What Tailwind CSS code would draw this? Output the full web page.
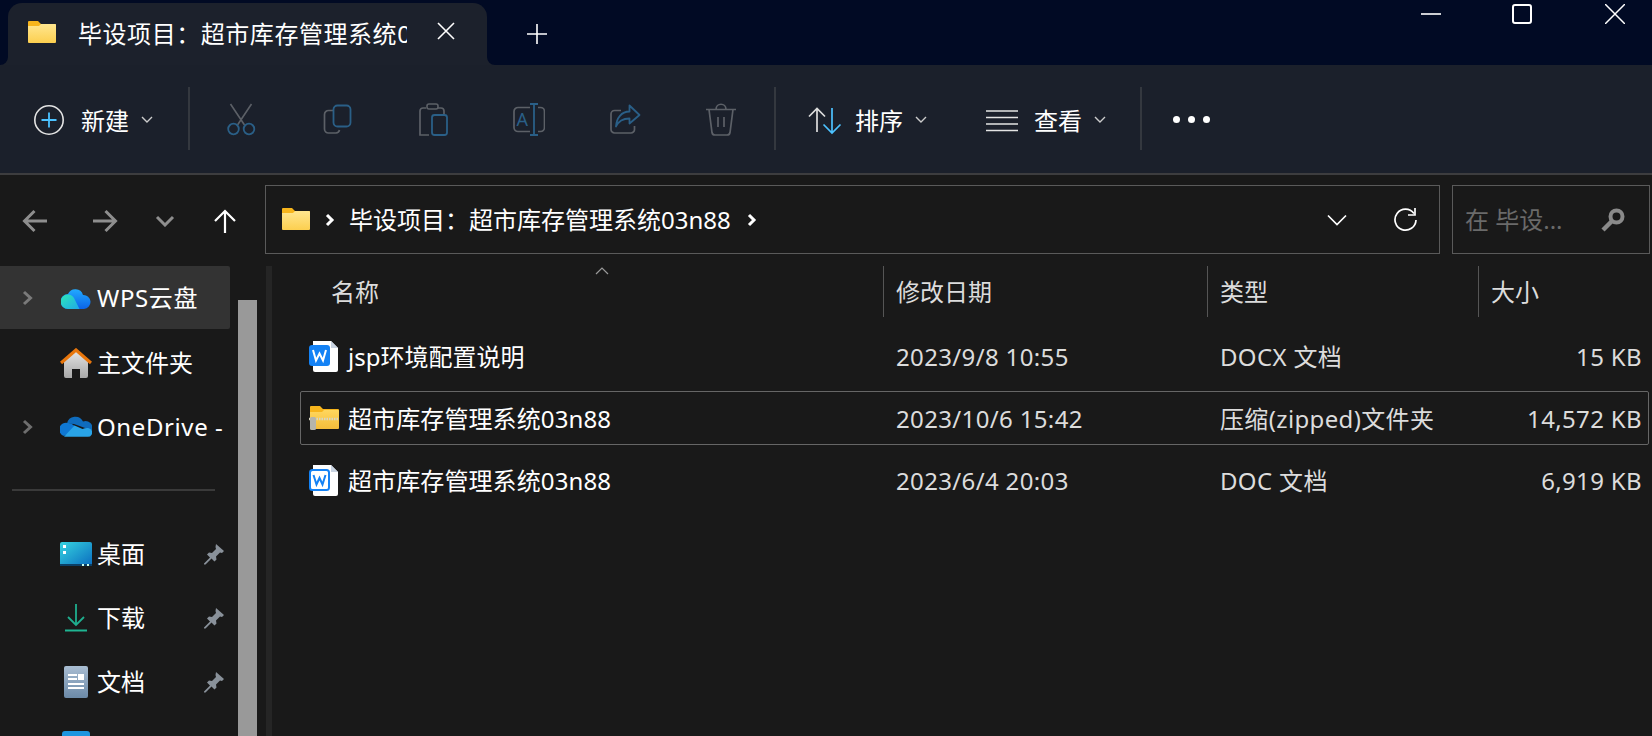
<!DOCTYPE html>
<html lang="zh-CN">
<head>
<meta charset="utf-8">
<script src="https://cdn.jsdelivr.net/npm/@tailwindcss/browser@4"></script>
</head>
<body class="m-0 overflow-hidden bg-[#191919]">
<div class="w-[1652px] h-[736px] overflow-hidden flex flex-col text-white text-[24px] leading-[32px] font-[family-name:'Noto_Sans','Noto_Sans_CJK_SC',sans-serif]">

  <!-- title bar -->
  <div class="h-[65px] shrink-0 bg-[#010a24] flex items-start">
    <div class="relative ml-2 mt-[3px] w-[479px] h-[62px] bg-[#1c212c] rounded-t-[14px] flex items-center">
      <svg class="absolute left-[-8px] bottom-0" width="8" height="8" viewBox="0 0 8 8"><path d="M8 0V8H0A8 8 0 0 0 8 0Z" fill="#1c212c"/></svg>
      <svg class="absolute right-[-8px] bottom-0" width="8" height="8" viewBox="0 0 8 8"><path d="M0 0V8H8A8 8 0 0 1 0 0Z" fill="#1c212c"/></svg>
      <svg class="ml-5 mb-[5px] shrink-0" width="28" height="24" viewBox="0 0 28 24"><defs><linearGradient id="f1" x1="0" y1="0" x2="0" y2="1"><stop offset="0" stop-color="#ffe68f"/><stop offset="1" stop-color="#fccf4f"/></linearGradient></defs><path d="M1 1h9l3 3h14a1 1 0 0 1 1 1v4H0V2a1 1 0 0 1 1-1z" fill="#f7b51c"/><path d="M0 6h11l2-2h14a1 1 0 0 1 1 1v17a1 1 0 0 1-1 1H1a1 1 0 0 1-1-1z" fill="url(#f1)"/></svg>
      <div class="ml-[22px] w-[329px] overflow-hidden whitespace-nowrap tracking-[0.55px]">毕设项目：超市库存管理系统03n88</div>
      <svg class="ml-[30px] mb-[6px]" width="18" height="18" viewBox="0 0 18 18"><path d="M1 1l16 16M17 1L1 17" stroke="#fff" stroke-width="1.6" fill="none"/></svg>
    </div>
    <svg class="ml-10 mt-6" width="20" height="20" viewBox="0 0 20 20"><path d="M10 0v20M0 10h20" stroke="#fff" stroke-width="1.6" fill="none"/></svg>
    <div class="ml-auto flex items-start pt-1 pr-[27px]">
      <svg width="20" height="20" viewBox="0 0 20 20"><path d="M0 10h20" stroke="#fff" stroke-width="1.6"/></svg>
      <div class="ml-[71px] w-5 h-5 border-2 border-white rounded-[3px]"></div>
      <svg class="ml-[73px]" width="20" height="20" viewBox="0 0 20 20"><path d="M0 0l20 20M20 0L0 20" stroke="#fff" stroke-width="1.5" fill="none"/></svg>
    </div>
  </div>

  <!-- toolbar -->
  <div class="h-[110px] shrink-0 bg-[#1b202b] border-b-2 border-[#3d3d3f] flex items-center pt-[1px]">
    <svg class="ml-[33px] shrink-0" width="32" height="32" viewBox="0 0 32 32"><circle cx="16" cy="16" r="14.2" fill="none" stroke="#e4e4e4" stroke-width="1.6"/><path d="M16 8.5v15M8.5 16h15" stroke="#4cc2ff" stroke-width="1.8"/></svg>
    <span class="ml-4 w-12 whitespace-nowrap pt-[3px]">新建</span>
    <svg class="ml-3" width="12" height="8" viewBox="0 0 12 8"><path d="M1 1l5 5 5-5" stroke="#ccc" stroke-width="1.4" fill="none"/></svg>
    <div class="ml-[35px] mb-[2px] w-[2px] h-[63px] bg-[#34383f]"></div>
    <div class="ml-[3px] flex">
      <div class="w-24 flex justify-center"><svg width="32" height="34" viewBox="0 0 32 34"><path d="M5.5 1l14 21M26.5 1l-14 21" stroke="#5c6067" stroke-width="1.6" fill="none"/><circle cx="8.5" cy="26" r="5.3" fill="none" stroke="#2a5f87" stroke-width="1.8"/><circle cx="24" cy="26" r="5.3" fill="none" stroke="#2a5f87" stroke-width="1.8"/></svg></div>
      <div class="w-24 flex justify-center"><svg width="32" height="32" viewBox="0 0 32 32"><path d="M12 7.5H7.5a4 4 0 0 0-4 4V26a4 4 0 0 0 4 4H15a4 4 0 0 0 3.5-3" fill="none" stroke="#5c6067" stroke-width="1.7"/><rect x="12.5" y="2.5" width="17" height="21" rx="4" fill="none" stroke="#2a5f87" stroke-width="1.8"/></svg></div>
      <div class="w-24 flex justify-center"><svg width="32" height="34" viewBox="0 0 32 34"><path d="M9 5H6a3 3 0 0 0-3 3v24h9M21 5h3a3 3 0 0 1 3 3v3" fill="none" stroke="#5c6067" stroke-width="1.7"/><rect x="10" y="1" width="11" height="5" rx="2" fill="none" stroke="#5c6067" stroke-width="1.6"/><rect x="15" y="12" width="15" height="20" rx="2.5" fill="none" stroke="#2a5f87" stroke-width="1.8"/></svg></div>
      <div class="w-24 flex justify-center"><svg width="32" height="34" viewBox="0 0 32 34"><path d="M17 4.500H5a4 4 0 0 0-4 4v16a4 4 0 0 0 4 4h12M25 4.500h2.500a4 4 0 0 1 4 4v16a4 4 0 0 1-4 4H25" fill="none" stroke="#5c6067" stroke-width="1.7"/><path d="M21 1v31M17 1h8M17 32h8" stroke="#2a5f87" stroke-width="1.8" fill="none"/><text x="3.500" y="23" font-size="18" fill="#2a5f87" font-family="Noto Sans">A</text></svg></div>
      <div class="w-24 flex justify-center"><svg width="32" height="32" viewBox="0 0 32 32"><path d="M12 7.500H5.500a3.500 3.500 0 0 0-3.500 3.500V26.500A3.500 3.500 0 0 0 5.500 30H22a3.500 3.500 0 0 0 3.500-3.500V23" fill="none" stroke="#5c6067" stroke-width="1.700"/><path d="M20.500 2.500 30.500 12 20.500 20.500V15.500C14 15.500 9.500 18 7 23.500 7.500 15 12.500 8.500 20.500 8.500Z" fill="none" stroke="#2a5f87" stroke-width="1.800" stroke-linejoin="round"/></svg></div>
      <div class="w-24 flex justify-center"><svg width="32" height="34" viewBox="0 0 32 34"><path d="M1 6.500h30M11 6.500c0-7 10-7 10 0M4 6.500l3 23a3 3 0 0 0 3 2.500h12a3 3 0 0 0 3-2.500l3-23M13 14v10M19 14v10" fill="none" stroke="#5c6067" stroke-width="1.700"/></svg></div>
    </div>
    <div class="ml-[5px] mb-[2px] w-[2px] h-[63px] bg-[#34383f]"></div>
    <svg class="ml-[32px] shrink-0" width="34" height="32" viewBox="0 0 34 32"><path d="M9 4.500V28M1 12.500l8-8 8 8" fill="none" stroke="#ddd" stroke-width="1.700"/><path d="M24 4v25M15.500 20.500l8.500 8.500 8.500-8.500" fill="none" stroke="#4cc2ff" stroke-width="1.700"/></svg>
    <span class="ml-[13px] w-12 whitespace-nowrap pt-[3px]">排序</span>
    <svg class="ml-3" width="12" height="8" viewBox="0 0 12 8"><path d="M1 1l5 5 5-5" stroke="#ccc" stroke-width="1.400" fill="none"/></svg>
    <svg class="ml-[59px] shrink-0" width="32" height="24" viewBox="0 0 32 24"><path d="M0 3h32M0 9.500h32M0 16h32M0 22.500h32" stroke="#e4e4e4" stroke-width="1.700"/></svg>
    <span class="ml-4 w-12 whitespace-nowrap pt-[3px]">查看</span>
    <svg class="ml-3" width="12" height="8" viewBox="0 0 12 8"><path d="M1 1l5 5 5-5" stroke="#ccc" stroke-width="1.400" fill="none"/></svg>
    <div class="ml-[34px] mb-[2px] w-[2px] h-[63px] bg-[#34383f]"></div>
    <div class="ml-[31px] flex gap-[8px]">
      <div class="w-[7px] h-[7px] rounded-full bg-white"></div>
      <div class="w-[7px] h-[7px] rounded-full bg-white"></div>
      <div class="w-[7px] h-[7px] rounded-full bg-white"></div>
    </div>
  </div>

  <!-- address row -->
  <div class="h-[91px] shrink-0 flex items-start pt-[10px]">
    <div class="w-[265px] h-[69px] flex items-center shrink-0 pt-[2px]">
      <svg class="ml-[22px]" width="26" height="24" viewBox="0 0 26 24"><path d="M25 12H3M12.500 2 2.500 12l10 10" fill="none" stroke="#8e8e8e" stroke-width="3"/></svg>
      <svg class="ml-11" width="26" height="24" viewBox="0 0 26 24"><path d="M1 12h22M13.500 2l10 10-10 10" fill="none" stroke="#8e8e8e" stroke-width="3"/></svg>
      <svg class="ml-[37px]" width="20" height="12" viewBox="0 0 20 12"><path d="M2 2l8 8 8-8" fill="none" stroke="#8e8e8e" stroke-width="3"/></svg>
      <svg class="ml-[38px]" width="24" height="24" viewBox="0 0 24 24"><path d="M12 24V2M2 12L12 2l10 10" fill="none" stroke="#fff" stroke-width="2.200"/></svg>
    </div>
    <div class="w-[1175px] h-[69px] border border-[#5a5a5a] flex items-center shrink-0">
      <svg class="ml-[15px] shrink-0 mb-[2px]" width="30" height="24" viewBox="0 0 28 24"><path d="M1 1h9l3 3h14a1 1 0 0 1 1 1v4H0V2a1 1 0 0 1 1-1z" fill="#f7b51c"/><path d="M0 6h11l2-2h14a1 1 0 0 1 1 1v17a1 1 0 0 1-1 1H1a1 1 0 0 1-1-1z" fill="url(#f1)"/></svg>
      <svg class="ml-[14px] shrink-0" width="10" height="14" viewBox="0 0 10 14"><path d="M2 2l5 5-5 5" fill="none" stroke="#fff" stroke-width="3"/></svg>
      <span class="ml-[14px] whitespace-nowrap">毕设项目：超市库存管理系统03n88</span>
      <svg class="ml-[16px] shrink-0" width="10" height="14" viewBox="0 0 10 14"><path d="M2 2l5 5-5 5" fill="none" stroke="#fff" stroke-width="3"/></svg>
      <svg class="ml-auto shrink-0" width="20" height="12" viewBox="0 0 20 12"><path d="M1 1.500l9 9 9-9" fill="none" stroke="#fff" stroke-width="1.700"/></svg>
      <svg class="ml-[46px] mr-[22px] shrink-0" width="24" height="24" viewBox="0 0 24 24"><path d="M21 5.500A10.500 10.500 0 1 0 23 12" fill="none" stroke="#fff" stroke-width="1.700"/><path d="M22 0v7h-7" fill="none" stroke="#fff" stroke-width="1.700"/></svg>
    </div>
    <div class="ml-3 w-[198px] h-[69px] border border-[#5a5a5a] flex items-center shrink-0">
      <span class="ml-3 text-[#6a6a6a] whitespace-nowrap">在 毕设...</span>
      <svg class="ml-auto mr-6" width="24" height="24" viewBox="0 0 24 24"><circle cx="15.500" cy="8.500" r="6" fill="none" stroke="#8a8a8a" stroke-width="4"/><path d="M10.500 13.500 2 22" stroke="#8a8a8a" stroke-width="4.500"/></svg>
    </div>
  </div>

  <!-- body -->
  <div class="flex-1 min-h-0 flex">
    <!-- sidebar -->
    <div class="w-[230px] shrink-0 flex flex-col">
      <div class="h-[63px] shrink-0 bg-[#333333] rounded-r-[2px] flex items-center mb-[2px]">
        <svg class="ml-[22px]" width="12" height="16" viewBox="0 0 12 16"><path d="M2 2l6.500 6L2 14" fill="none" stroke="#7a7a7a" stroke-width="3"/></svg>
        <svg class="ml-[27px] shrink-0" width="30" height="22" viewBox="0 0 30 22"><defs><linearGradient id="w1" x1="0" y1="0" x2="1" y2="1"><stop offset="0" stop-color="#2de8b8"/><stop offset="1" stop-color="#1fa8e8"/></linearGradient><linearGradient id="w2" x1="0" y1="0" x2="0" y2="1"><stop offset="0" stop-color="#22aaff"/><stop offset="1" stop-color="#0b63e8"/></linearGradient></defs><path d="M7 7a8 8 0 0 1 15 1 7 7 0 0 1 1 14H7a7.500 7.500 0 0 1 0-15z" fill="url(#w2)"/><path d="M7 7.500a7.300 7.300 0 0 1 6 3.500l5.500 11H7a7.200 7.200 0 0 1 0-14.500z" fill="url(#w1)"/></svg>
        <span class="ml-[6px] whitespace-nowrap tracking-[0.6px]">WPS云盘</span>
      </div>
      <div class="h-16 shrink-0 flex items-center">
        <svg class="ml-[60px] shrink-0" width="32" height="31" viewBox="0 0 32 31"><defs><linearGradient id="h1" x1="0" y1="0" x2="0" y2="1"><stop offset="0" stop-color="#e4e4e4"/><stop offset="1" stop-color="#a8a8a8"/></linearGradient></defs><path d="M4 13 16 3l12 10v15a2 2 0 0 1-2 2h-6v-9h-8v9H6a2 2 0 0 1-2-2z" fill="url(#h1)"/><path d="M1 15 16 2l15 13" fill="none" stroke="#e8760c" stroke-width="3.200"/></svg>
        <span class="ml-[5px] whitespace-nowrap">主文件夹</span>
      </div>
      <div class="h-[63px] shrink-0 flex items-center">
        <svg class="ml-[22px]" width="12" height="16" viewBox="0 0 12 16"><path d="M2 2l6.500 6L2 14" fill="none" stroke="#6e6e6e" stroke-width="3"/></svg>
        <svg class="ml-[26px] shrink-0" width="32" height="21" viewBox="0 0 32 21"><path d="M7 7.500a8.500 8.500 0 0 1 16-2 7 7 0 0 1 9 9L14 8z" fill="#0f6cbd"/><path d="M8 7a8 8 0 0 1 6 2.500l6 3.500-16 7a6.800 6.800 0 0 1 4-13z" fill="#0f78d4"/><path d="M4 20.800h23.500a4.400 4.400 0 0 0 4-6.800c-3-3-6-2-9-1l-8-3.500z" fill="#29a4e8"/></svg>
        <span class="ml-[5px] whitespace-nowrap overflow-hidden tracking-[0.6px]">OneDrive -</span>
      </div>
      <div class="h-[2px] shrink-0 ml-3 w-[203px] mt-[31px] mb-[31px] bg-[#3a3a3a]"></div>
      <div class="h-16 shrink-0 flex items-center">
        <svg class="ml-[60px] shrink-0" width="32" height="24" viewBox="0 0 32 24"><defs><linearGradient id="d1" x1="0" y1="0" x2="1" y2="1"><stop offset="0" stop-color="#36d4e0"/><stop offset="1" stop-color="#0a6cbf"/></linearGradient></defs><rect width="32" height="24" rx="2" fill="url(#d1)"/><rect y="22" width="32" height="2" fill="#0b3f66"/><rect x="3" y="3" width="3" height="3" fill="#fff"/><rect x="3" y="9" width="3" height="3" fill="#fff"/><rect x="22" y="22" width="2" height="2" fill="#cfe"/><rect x="27" y="22" width="2" height="2" fill="#cfe"/></svg>
        <span class="ml-[5px] w-12 whitespace-nowrap">桌面</span>
        <svg class="ml-[58px] shrink-0" width="22" height="22" viewBox="0 0 22 22"><path d="M13 1l8 7-2 2-2-.500-4 4 .500 3-2 2-3-3-6 6H1v-1l6-6-3-3 2-2 3 .500 4-4-.500-2z" fill="#89919a"/></svg>
      </div>
      <div class="h-16 shrink-0 flex items-center">
        <svg class="ml-[65px] shrink-0" width="22" height="28" viewBox="0 0 22 28"><path d="M11 0v21M3 13l8 8 8-8" fill="none" stroke="#1fae8e" stroke-width="1.800"/><path d="M0 26.500h22" stroke="#1fb592" stroke-width="2"/></svg>
        <span class="ml-[10px] w-12 whitespace-nowrap">下载</span>
        <svg class="ml-[58px] shrink-0" width="22" height="22" viewBox="0 0 22 22"><path d="M13 1l8 7-2 2-2-.500-4 4 .500 3-2 2-3-3-6 6H1v-1l6-6-3-3 2-2 3 .500 4-4-.500-2z" fill="#89919a"/></svg>
      </div>
      <div class="h-16 shrink-0 flex items-center">
        <svg class="ml-[64px] shrink-0" width="24" height="32" viewBox="0 0 24 32"><defs><linearGradient id="c1" x1="0" y1="0" x2="0" y2="1"><stop offset="0" stop-color="#a9bdd2"/><stop offset="1" stop-color="#6c8aa8"/></linearGradient></defs><rect width="24" height="32" rx="2" fill="url(#c1)"/><path d="M4 9h9M4 13h9M4 18h16M4 22h16" stroke="#fff" stroke-width="1.800"/><rect x="14" y="8" width="6" height="6" fill="#fff"/></svg>
        <span class="ml-[9px] w-12 whitespace-nowrap">文档</span>
        <svg class="ml-[58px] shrink-0" width="22" height="22" viewBox="0 0 22 22"><path d="M13 1l8 7-2 2-2-.500-4 4 .500 3-2 2-3-3-6 6H1v-1l6-6-3-3 2-2 3 .500 4-4-.500-2z" fill="#89919a"/></svg>
      </div>
      <div class="ml-[62px] mt-[17px] w-7 h-7 rounded-[3px] bg-[#1e96e0] shrink-0"></div>
    </div>

    <!-- scrollbar -->
    <div class="ml-2 w-[19px] shrink-0 pt-[34px]"><div class="h-full bg-[#999999]"></div></div>
    <div class="ml-[9px] w-[6px] shrink-0 bg-[#252525]"></div>

    <!-- files -->
    <div class="relative flex-1 min-w-0 pl-7 flex flex-col text-[#dcdcdc]">
      <svg class="absolute left-[323px] top-[1px]" width="14" height="8" viewBox="0 0 14 8"><path d="M1 7l6-6 6 6" fill="none" stroke="#9a9a9a" stroke-width="1.200"/></svg>
      <div class="grid grid-cols-[583px_324px_271px_1fr] h-[51px] shrink-0 mb-3">
        <div class="pl-[31px] flex items-center">名称</div>
        <div class="border-l border-[#555] pl-3 flex items-center">修改日期</div>
        <div class="border-l border-[#555] pl-3 flex items-center">类型</div>
        <div class="border-l border-[#555] pl-3 flex items-center">大小</div>
      </div>
      <div class="flex flex-col gap-2 w-[1349px]">
        <div class="grid grid-cols-[584px_323px_271px_1fr] h-[54px] items-center border border-transparent">
          <div class="flex items-center text-white">
            <svg class="ml-[8px] shrink-0" width="30" height="32" viewBox="0 0 30 32"><path d="M4 1h18l7 7v22a2 2 0 0 1-2 2H6a2 2 0 0 1-2-2z" fill="#fff"/><path d="M22 1l7 7h-7z" fill="#c9d4e2"/><rect x="0" y="5" width="21" height="21" rx="3" fill="#1482f5"/><path d="M4 10l3 10.500 3.500-7 3.500 7 3-10.500" fill="none" stroke="#fff" stroke-width="2"/></svg>
            <span class="ml-[9px] whitespace-nowrap pt-[2px]">jsp环境配置说明</span>
          </div>
          <div class="pl-[11px] pt-[2px] tracking-[0.35px]">2023/9/8 10:55</div>
          <div class="pl-3 pt-[2px] whitespace-nowrap tracking-[0.35px]">DOCX 文档</div>
          <div class="text-right pr-[6px] pt-[2px] tracking-[0.35px]">15 KB</div>
        </div>
        <div class="grid grid-cols-[584px_323px_271px_1fr] h-[54px] items-center border border-[#666] rounded-[2px]">
          <div class="flex items-center text-white">
            <svg class="ml-[8px] shrink-0" width="30" height="26" viewBox="0 0 30 26"><defs><linearGradient id="z1" x1="0" y1="0" x2="0" y2="1"><stop offset="0" stop-color="#ffd75e"/><stop offset="1" stop-color="#f4bd3a"/></linearGradient></defs><path d="M2 1h9l3 3h15a1 1 0 0 1 1 1v4H1V2a1 1 0 0 1 1-1z" fill="#f7b51c"/><path d="M1 7h12l2-2h14a1 1 0 0 1 1 1v17a1 1 0 0 1-1 1H2a1 1 0 0 1-1-1z" fill="url(#z1)"/><path d="M0 14h30" stroke="#d8d6c4" stroke-width="2.400" stroke-dasharray="1.500 1"/><rect x="1" y="12" width="6" height="13" rx="1.500" fill="#b5b5ac"/></svg>
            <span class="ml-[9px] whitespace-nowrap pt-[2px] tracking-[0.1px]">超市库存管理系统03n88</span>
          </div>
          <div class="pl-[11px] pt-[2px] tracking-[0.35px]">2023/10/6 15:42</div>
          <div class="pl-3 pt-[2px] whitespace-nowrap tracking-[0.35px]">压缩(zipped)文件夹</div>
          <div class="text-right pr-[6px] pt-[2px] whitespace-nowrap tracking-[0.35px]">14,572 KB</div>
        </div>
        <div class="grid grid-cols-[584px_323px_271px_1fr] h-[54px] items-center border border-transparent">
          <div class="flex items-center text-white">
            <svg class="ml-[8px] shrink-0" width="30" height="32" viewBox="0 0 30 32"><path d="M4 1h18l7 7v22a2 2 0 0 1-2 2H6a2 2 0 0 1-2-2z" fill="#fff"/><path d="M22 1l7 7h-7z" fill="#c9d4e2"/><rect x="1" y="6" width="19" height="20" rx="2.500" fill="#fff" stroke="#1482f5" stroke-width="2"/><path d="M4.500 11l3 9.500 3-6.500 3 6.500 3-9.500" fill="none" stroke="#1482f5" stroke-width="2"/></svg>
            <span class="ml-[9px] whitespace-nowrap pt-[2px] tracking-[0.1px]">超市库存管理系统03n88</span>
          </div>
          <div class="pl-[11px] pt-[2px] tracking-[0.35px]">2023/6/4 20:03</div>
          <div class="pl-3 pt-[2px] whitespace-nowrap tracking-[0.35px]">DOC 文档</div>
          <div class="text-right pr-[6px] pt-[2px] tracking-[0.35px]">6,919 KB</div>
        </div>
      </div>
    </div>
  </div>
</div>
</body>
</html>
